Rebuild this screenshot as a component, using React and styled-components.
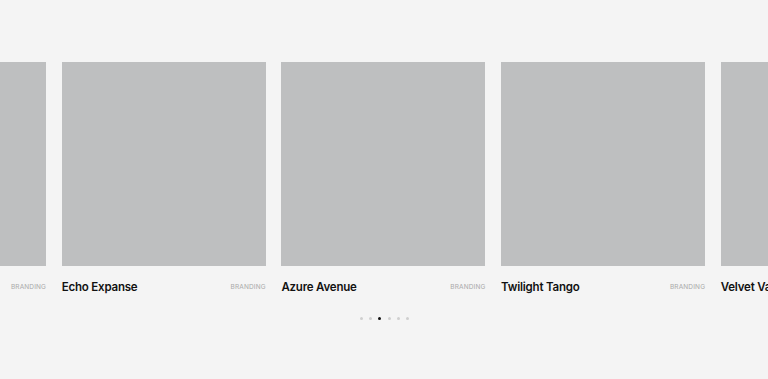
import styled, { createGlobalStyle } from 'styled-components';

const GlobalStyle = createGlobalStyle`
  html, body {
    margin: 0;
    padding: 0;
    background: #f4f4f4;
  }
  body {
    font-family: Inter, "Noto Sans", sans-serif;
  }
`;

const Section = styled.section`
  width: 768px;
  height: 379px;
  padding-top: 62px;
  box-sizing: border-box;
  overflow: hidden;
  background: #f4f4f4;
`;

const Viewport = styled.div`
  overflow: hidden;
  width: 100%;
`;

const Track = styled.div`
  display: flex;
  gap: 15.6px;
  transform: translateX(-158px);
`;

const Card = styled.div`
  flex: 0 0 204.1px;
  display: flex;
  flex-direction: column;
`;

const Thumb = styled.div`
  width: 100%;
  height: 204px;
  background: #bebfc0;
`;

const Meta = styled.div`
  display: flex;
  justify-content: space-between;
  align-items: center;
  height: 16px;
  margin-top: 13px;
`;

const Title = styled.h3`
  margin: 0;
  font-size: 11.5px;
  font-weight: 600;
  color: #111;
  letter-spacing: -0.2px;
`;

const Tag = styled.span`
  font-size: 6.5px;
  letter-spacing: 0.15px;
  color: #a9a9a9;
  text-transform: uppercase;
`;

const Dots = styled.div`
  display: flex;
  justify-content: center;
  gap: 6.3px;
  margin-top: 22px;
  padding-left: 1px;
`;

const Dot = styled.span`
  width: 3px;
  height: 3px;
  border-radius: 50%;
  background: ${(p) => (p.$active ? '#111' : '#cfcfcf')};
`;

const projects = [
  'Solar Drift',
  'Echo Expanse',
  'Azure Avenue',
  'Twilight Tango',
  'Velvet Vantage',
];

export default function App() {
  return (
    <>
      <GlobalStyle />
      <Section>
        <Viewport>
          <Track>
            {projects.map((name) => (
              <Card key={name}>
                <Thumb />
                <Meta>
                  <Title>{name}</Title>
                  <Tag>Branding</Tag>
                </Meta>
              </Card>
            ))}
          </Track>
        </Viewport>
        <Dots>
          {[0, 1, 2, 3, 4, 5].map((i) => (
            <Dot key={i} $active={i === 2} />
          ))}
        </Dots>
      </Section>
    </>
  );
}
